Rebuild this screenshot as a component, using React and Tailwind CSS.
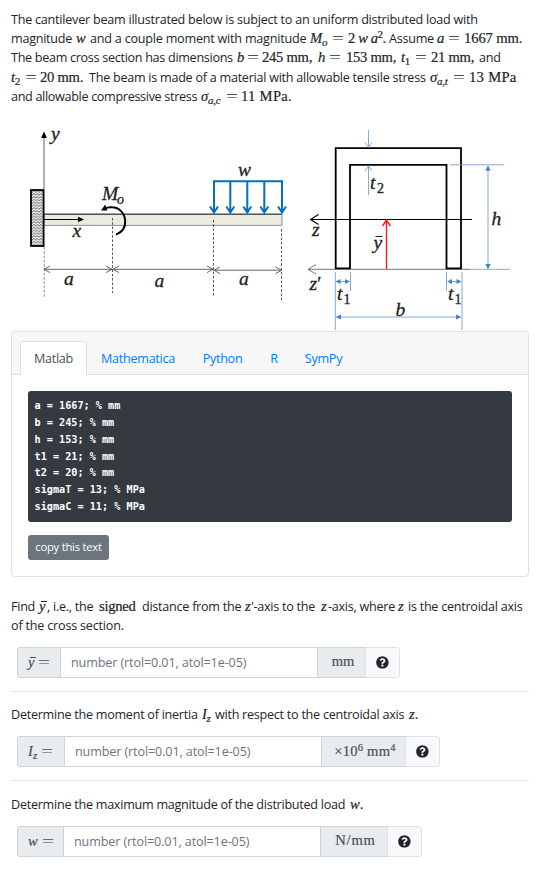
import React, { useState } from "react"
import { FaQuestionCircle } from "react-icons/fa"

const tabs = [
  { name: "Matlab", width: "w-[67px]" },
  { name: "Mathematica", width: "w-[102px]" },
  { name: "Python", width: "w-[67px]" },
  { name: "R", width: "w-[36px]" },
  { name: "SymPy", width: "w-[63px]" },
]

const code = `a = 1667; % mm
b = 245; % mm
h = 153; % mm
t1 = 21; % mm
t2 = 20; % mm
sigmaT = 13; % MPa
sigmaC = 11; % MPa`

const mathClass = "font-['Liberation_Serif',serif] text-[14.6px] leading-none [-webkit-text-stroke:0.2px]"

function Line({ children }) {
  return <span className="flex h-[19.2px] items-baseline whitespace-pre leading-[19.2px]">{children}</span>
}

function Text({ className = "", children }) {
  return <span className={`shrink-0 ${className}`}>{children}</span>
}

function MathText({ className = "tracking-normal", children }) {
  return <span className={`shrink-0 ${mathClass} ${className}`}>{children}</span>
}

function Eq({ className = "w-[16px]" }) {
  return (
    <MathText className={className}>
      <span className="relative -left-px inline-block origin-left scale-x-[1.45] [-webkit-text-stroke:0]">=</span>
    </MathText>
  )
}

function Sub({ children }) {
  return <span className="relative top-[3px] text-[11px]">{children}</span>
}

function Sup({ children }) {
  return <span className="relative -top-[5px] text-[10.5px]">{children}</span>
}

function YBar() {
  return (
    <span className="relative italic">
      y<span className="absolute left-[2px] top-[3px] h-px w-[6px] bg-current" />
    </span>
  )
}

function Diagram() {
  const loads = [214, 230.3, 247.3, 264.3, 282]
  return (
    <svg className="block h-[211px] w-[538px] tracking-normal" viewBox="0 120 538 211" fill="none">
      <defs>
        <pattern id="wall" width="3.4" height="2.8" patternUnits="userSpaceOnUse">
          <path d="M0 .4 L1.7 2.2 L3.4 .4" stroke="#222" strokeWidth=".8" />
        </pattern>
      </defs>

      {/* beam */}
      <rect x="44" y="214.3" width="238" height="11" fill="#ecebe0" stroke="#777" strokeWidth=".8" />
      <path d="M44 214.2H282" stroke="#555" strokeWidth="1.6" />
      <rect x="31" y="190" width="12.6" height="56" fill="url(#wall)" stroke="#000" strokeWidth="1.8" />
      <path d="M44 190V136" stroke="#666" />
      <path d="M44 131.5l-2.9 6.5h5.8z" fill="#000" />
      <path d="M44 219.5H79" stroke="#000" strokeWidth="1.2" />
      <path d="M84 219.5l-6-2.8v5.6z" fill="#000" />
      <path d="M116 234.6C122.5 232 125.5 227 125.2 221C124.8 213 119 207.2 112 207.2C109 207 106.5 207.5 105 208.6" stroke="#000" strokeWidth="2" />
      <path d="M101 210.6l4.3-6 2 6z" fill="#000" />

      {/* dimensions along the beam */}
      <g stroke="#555" strokeDasharray="2.5 1.8">
        <path d="M44.2 247V298" stroke="#888" />
        <path d="M112.5 218V293" />
        <path d="M213.5 220V296" />
        <path d="M281.5 229V300" />
      </g>
      <g stroke="#555" strokeWidth=".9">
        <path d="M44 269.3H213M213 270.2H281.5" />
        <path d="M50 266l-6 3.3 6 3.3M106 266l6 3.3-6 3.3M119 266l-6 3.3 6 3.3M207 266l6 3.3-6 3.3M220 267l-6 3.3 6 3.3M275.5 267l6 3.3-6 3.3" />
      </g>

      {/* distributed load */}
      <g stroke="#0070c0" strokeWidth="2">
        <path d="M213 181.3H283" />
        {loads.map((x) => (
          <path key={x} d={`M${x} 181V212M${x - 4} 206.5L${x} 212.5L${x + 4} 206.5`} />
        ))}
      </g>

      {/* cross section */}
      <path d="M310 219.5H472M318.5 214.5l-8 5 8 5" stroke="#000" strokeWidth="1.1" />
      <path d="M308 269.3H470M316 264.5l-8 4.8 8 4.8" stroke="#666" strokeWidth=".9" />
      <path d="M335.7 268.3V148.2H461V268.3H446.5V164.8H350V268.3Z" stroke="#000" strokeWidth="1.8" />
      <path d="M386.5 269V220.5M382.5 226l4-6 4 6" stroke="#ff1a1a" strokeWidth="1.4" />

      <g stroke="#6f9bd1" strokeWidth="1" strokeOpacity=".85">
        <path d="M368.5 130V147M365 142.5l3.5 5 3.5-5M368.5 195V165.5M365 171l3.5-5 3.5 5" />
        <path d="M335.3 272V330M350.5 272V291M446.5 272V291M462 272V330" />
        <path d="M337 281.5H349M448 281.5H460M338 317H459M450 164.8H504M470 269.3H510M488 168V266" />
      </g>
      <g fill="#4a80c4">
        <path d="M335.5 281.5l5-2.5v5zM350 281.5l-5-2.5v5zM447 281.5l5-2.5v5zM461.5 281.5l-5-2.5v5z" />
        <path d="M335.5 317l5.5-2.5v5zM461.5 317l-5.5-2.5v5zM488 165.3l-2.6 5.5h5.2zM488 269.5l-2.6-5.5h5.2z" />
      </g>

      <g fill="#222" stroke="#222" strokeWidth=".3" className="font-['Liberation_Serif',serif] text-[19.5px] italic">
        <text x="51" y="140">y</text>
        <text x="72.5" y="237">x</text>
        <text x="102" y="200">M</text>
        <text x="117" y="204" className="text-[14px]">o</text>
        <text x="64" y="285">a</text>
        <text x="154.5" y="287">a</text>
        <text x="239" y="285">a</text>
        <text x="238" y="176">w</text>
        <text x="370" y="189">t</text>
        <text x="377" y="193" className="text-[14px] not-italic">2</text>
        <text x="373.5" y="249">y</text>
        <path d="M375.5 236.5H382.5" strokeWidth="1" />
        <text x="312" y="236">z</text>
        <text x="309.5" y="290">z</text>
        <text x="316" y="290">′</text>
        <text x="337" y="300">t</text>
        <text x="343.5" y="303.5" className="text-[14px] not-italic">1</text>
        <text x="448" y="300">t</text>
        <text x="454.5" y="303.5" className="text-[14px] not-italic">1</text>
        <text x="395.5" y="315.5">b</text>
        <text x="491.5" y="225">h</text>
      </g>
    </svg>
  )
}

function CodeCard() {
  const [active, setActive] = useState("Matlab")
  return (
    <div className="ml-[11px] h-[246px] w-[518px] rounded-[4px] border border-[#dfdfdf] bg-white">
      <div className="flex h-[43px] items-end rounded-t-[3px] border-b border-[#dfdfdf] bg-[#f7f7f7] pl-2">
        {tabs.map((tab) => (
          <button
            key={tab.name}
            onClick={() => setActive(tab.name)}
            className={`-mb-px h-[34px] rounded-t-[4px] border border-b-0 pt-[2px] text-center tracking-[-0.28px] ${tab.width} ${
              active === tab.name ? "border-[#dee2e6] bg-white text-[#495057]" : "border-transparent text-[#007bff]"
            }`}
          >
            {tab.name}
          </button>
        ))}
      </div>
      <div className="px-4 pt-4">
        <pre className="h-[131px] rounded-[3px] bg-[#343a40] px-[6.5px] pt-[7.2px] font-['DejaVu_Sans_Mono',monospace] text-[10.2px] font-bold leading-[16.8px] tracking-normal text-white">
          {code}
        </pre>
        <button className="mt-[13px] h-[25px] w-[81px] rounded-[3px] bg-[#6c757d] text-[11.2px] tracking-[-0.22px] text-white">
          copy this text
        </button>
      </div>
    </div>
  )
}

function NumberInput({ label, labelWidth, unit, unitWidth }) {
  return (
    <div className="ml-[17px] flex h-[31px]">
      <span className={`flex items-center rounded-l-[3px] border border-[#ced4da] bg-[#e9ecef] pl-[10px] text-[#495057] ${labelWidth}`}>
        <MathText className="tracking-normal">{label}</MathText>
        <Eq className="ml-[5px]" />
      </span>
      <input
        className="-ml-px w-[258px] border border-[#ced4da] bg-white px-[10px] pt-[2px] tracking-[-0.12px] outline-none placeholder:text-[#6c757d]"
        placeholder="number (rtol=0.01, atol=1e-05)"
      />
      <span className={`-ml-px flex items-center justify-center border border-[#ced4da] bg-[#e9ecef] text-[#495057] ${unitWidth}`}>
        <span className="pl-[3px]">
          <MathText className="whitespace-pre tracking-normal">{unit}</MathText>
        </span>
      </span>
      <button className="-ml-px flex w-[35px] items-center justify-center rounded-r-[3px] border border-[#dee2e6] bg-[#f8f9fa] text-[#212529]">
        <FaQuestionCircle size={12.8} />
      </button>
    </div>
  )
}

function App() {
  return (
    <div className="h-[873px] w-[538px] overflow-hidden bg-white font-['Open_Sans',sans-serif] text-[12.6px] tracking-[-0.26px] text-[#212529]">
      <p className="h-[120px] pl-[11px] pt-[10px]">
        <Line>
          <Text className="tracking-[-0.235px]">The cantilever beam illustrated below is subject to an uniform distributed load with</Text>
        </Line>
        <Line>
          <Text className="w-[65px]">magnitude</Text>
          <MathText className="w-[14px] italic">w</MathText>
          <Text className="w-[220px] tracking-[-0.22px]">and a couple moment with magnitude</Text>
          <MathText className="w-[23px] italic">M<Sub>o</Sub></MathText>
          <Eq className="w-[15px]" />
          <MathText className="w-[41px] tracking-[-0.4px]">2 <i>w a</i><Sup>2</Sup>.</MathText>
          <Text className="w-[48px]">Assume</Text>
          <MathText className="w-[12px] italic">a</MathText>
          <Eq className="w-[15px]" />
          <MathText className="tracking-[-0.1px]">1667 mm.</MathText>
        </Line>
        <Line>
          <Text className="w-[226px] tracking-[-0.3px]">The beam cross section has dimensions</Text>
          <MathText className="w-[11px] italic">b</MathText>
          <Eq className="w-[14px]" />
          <MathText className="w-[56px]">245 mm,</MathText>
          <MathText className="w-[12px] italic">h</MathText>
          <Eq className="w-[16px]" />
          <MathText className="w-[55px]">153 mm,</MathText>
          <MathText className="w-[15px]"><i>t</i><Sub>1</Sub></MathText>
          <Eq className="w-[15px]" />
          <MathText className="w-[48px]">21 mm,</MathText>
          <Text>and</Text>
        </Line>
        <Line>
          <MathText className="w-[15px]"><i>t</i><Sub>2</Sub></MathText>
          <Eq className="w-[14px]" />
          <MathText className="w-[49px]">20 mm.</MathText>
          <Text className="w-[341px]">The beam is made of a material with allowable tensile stress</Text>
          <MathText className="w-[24px] italic">σ<Sub>a,t</Sub></MathText>
          <Eq className="w-[15px]" />
          <MathText className="tracking-[0.3px]">13 MPa</MathText>
        </Line>
        <Line>
          <Text className="w-[190px] tracking-[-0.32px]">and allowable compressive stress</Text>
          <MathText className="w-[26px] italic">σ<Sub>a,c</Sub></MathText>
          <Eq className="w-[14px]" />
          <MathText className="tracking-[0.3px]">11 MPa.</MathText>
        </Line>
      </p>

      <Diagram />
      <CodeCard />

      <div className="pl-[11px] pt-5">
        <Line>
          <Text className="w-[28px]">Find</Text>
          <MathText className="w-[8px]"><YBar /></MathText>
          <Text className="w-[52px]">, i.e., the</Text>
          <MathText className="w-[43px]">signed</MathText>
          <Text className="w-[103px]">distance from the</Text>
          <MathText className="w-[6px] italic">z</MathText>
          <Text className="w-[70px]">'-axis to the</Text>
          <MathText className="w-[7px] italic">z</MathText>
          <Text className="w-[70px]">-axis, where</Text>
          <MathText className="w-[10px] italic">z</MathText>
          <Text>is the centroidal axis</Text>
        </Line>
        <Line>
          <Text className="tracking-[-0.2px]">of the cross section.</Text>
        </Line>
      </div>
      <div className="mt-[11.6px]">
        <NumberInput label={<YBar />} labelWidth="w-[44px]" unit="mm" unitWidth="w-[49px]" />
      </div>
      <hr className="ml-[11px] mt-[13px] w-[518px] border-[#e5e5e5]" />

      <div className="pl-[11px] pt-[13px]">
        <Line>
          <Text className="w-[191px]">Determine the moment of inertia</Text>
          <MathText className="w-[13px] italic">I<Sub>z</Sub></MathText>
          <Text className="w-[194px]">with respect to the centroidal axis</Text>
          <MathText><i>z</i>.</MathText>
        </Line>
      </div>
      <div className="mt-[11.8px]">
        <NumberInput
          label={<i>I<Sub>z</Sub></i>}
          labelWidth="w-[48px]"
          unit={<span className="relative top-px tracking-[0.2px]">×10<Sup>6</Sup> mm<Sup>4</Sup></span>}
          unitWidth="w-[85px]"
        />
      </div>
      <hr className="ml-[11px] mt-[13px] w-[518px] border-[#e5e5e5]" />

      <div className="pl-[11px] pt-[14px]">
        <Line>
          <Text className="w-[339px]">Determine the maximum magnitude of the distributed load</Text>
          <MathText><i>w</i>.</MathText>
        </Line>
      </div>
      <div className="mt-[11.8px]">
        <NumberInput label={<i>w</i>} labelWidth="w-[47px]" unit={<span className="tracking-[0.8px]">N/mm</span>} unitWidth="w-[68px]" />
      </div>
    </div>
  )
}

export default App
